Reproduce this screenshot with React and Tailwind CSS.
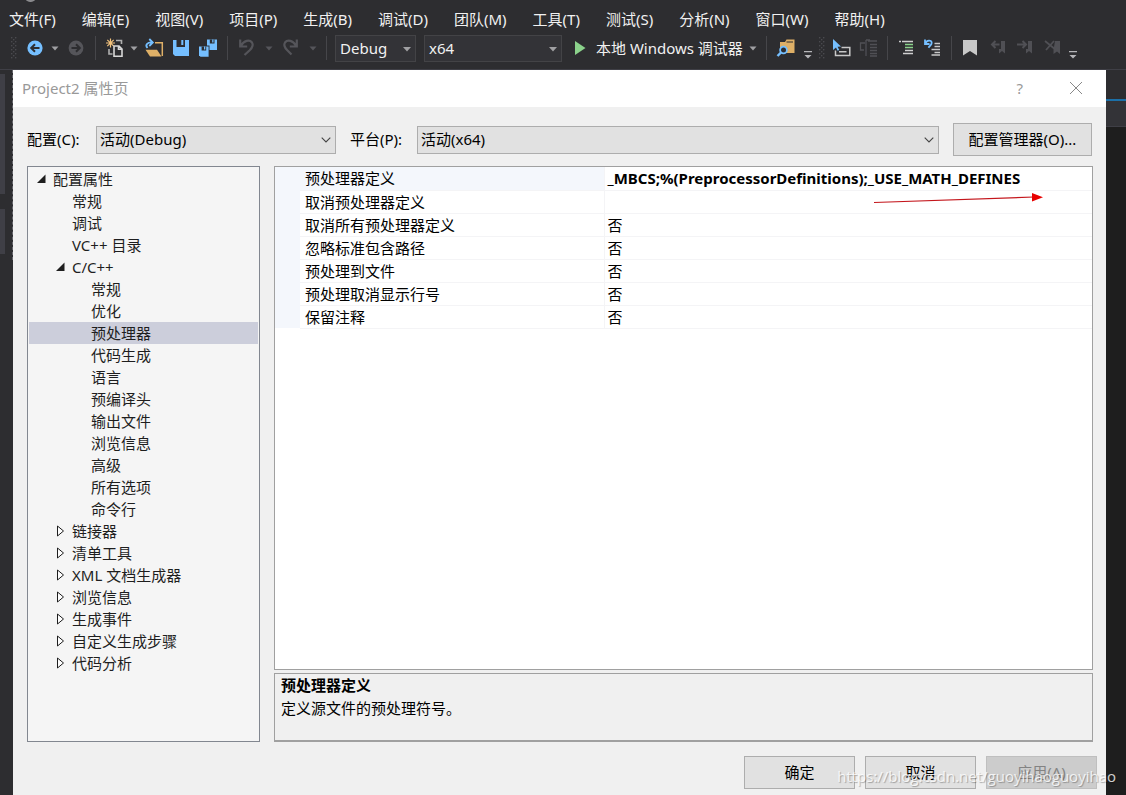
import clsx from 'clsx'

const menus = ['文件(F)', '编辑(E)', '视图(V)', '项目(P)', '生成(B)', '调试(D)', '团队(M)', '工具(T)', '测试(S)', '分析(N)', '窗口(W)', '帮助(H)']

const tree = [
  { label: '配置属性', level: 0, state: 'open' },
  { label: '常规', level: 1 },
  { label: '调试', level: 1 },
  { label: 'VC++ 目录', level: 1 },
  { label: 'C/C++', level: 1, state: 'open' },
  { label: '常规', level: 2 },
  { label: '优化', level: 2 },
  { label: '预处理器', level: 2, selected: true },
  { label: '代码生成', level: 2 },
  { label: '语言', level: 2 },
  { label: '预编译头', level: 2 },
  { label: '输出文件', level: 2 },
  { label: '浏览信息', level: 2 },
  { label: '高级', level: 2 },
  { label: '所有选项', level: 2 },
  { label: '命令行', level: 2 },
  { label: '链接器', level: 1, state: 'closed' },
  { label: '清单工具', level: 1, state: 'closed' },
  { label: 'XML 文档生成器', level: 1, state: 'closed' },
  { label: '浏览信息', level: 1, state: 'closed' },
  { label: '生成事件', level: 1, state: 'closed' },
  { label: '自定义生成步骤', level: 1, state: 'closed' },
  { label: '代码分析', level: 1, state: 'closed' },
]

const indents = ['pl-[7px]', 'pl-[26px]', 'pl-[45px]']

const properties = [
  { name: '预处理器定义', value: '_MBCS;%(PreprocessorDefinitions);_USE_MATH_DEFINES', active: true },
  { name: '取消预处理器定义', value: '' },
  { name: '取消所有预处理器定义', value: '否' },
  { name: '忽略标准包含路径', value: '否' },
  { name: '预处理到文件', value: '否' },
  { name: '预处理取消显示行号', value: '否' },
  { name: '保留注释', value: '否' },
]

function ToolButton({ label, className, children }) {
  return (
    <button aria-label={label} className={clsx('shrink-0', className)}>
      <svg width="20" height="20" viewBox="0 0 20 20" fill="none">{children}</svg>
    </button>
  )
}

function Caret({ className, dim }) {
  return (
    <button aria-label="展开" className={clsx('w-3 shrink-0', className)}>
      <svg width="12" height="20" viewBox="0 0 12 20">
        <path d="M2.5 8.5h7L6 12.5z" fill={dim ? '#55555a' : '#a0a0a3'} />
      </svg>
    </button>
  )
}

function Overflow({ className }) {
  return (
    <button aria-label="工具栏选项" className={clsx('w-3 shrink-0', className)}>
      <svg width="12" height="24" viewBox="0 0 12 24">
        <path d="M2 15h8v1.2H2zM2.5 19h7L6 22.5z" fill="#b5b5b8" />
      </svg>
    </button>
  )
}

function Separator({ className }) {
  return <div className={clsx('h-6 w-px shrink-0 bg-[#46464a]', className)} />
}

function Grip({ className }) {
  return (
    <svg width="8" height="22" viewBox="0 0 8 22" className={clsx('shrink-0', className)} fill="#4a4a4f">
      {[0, 4, 8, 12, 16, 20].map(y => (
        <g key={y}>
          <rect x="1" y={y} width="1.4" height="1.4" />
          <rect x="5" y={y} width="1.4" height="1.4" />
          <rect x="3" y={y + 2} width="1.4" height="1.4" />
        </g>
      ))}
    </svg>
  )
}

function ToolbarSelect({ label, value, className }) {
  return (
    <div className={clsx('relative shrink-0', className)}>
      <select aria-label={label} className="h-[27px] w-full appearance-none border border-[#434346] bg-[#333337] px-1 text-[#f1f1f1]">
        <option>{value}</option>
      </select>
      <svg width="8" height="5" viewBox="0 0 8 5" className="pointer-events-none absolute right-[5px] top-[12px]">
        <path d="M0 0h8L4 4.5z" fill="#a0a0a3" />
      </svg>
    </div>
  )
}

function DialogSelect({ id, value, className }) {
  return (
    <div className={clsx('relative', className)}>
      <select id={id} className="h-7 w-full appearance-none border border-[#adadad] bg-[#e1e1e1] px-[3px] pb-[2px] text-black">
        <option>{value}</option>
      </select>
      <svg width="10" height="6" viewBox="0 0 10 6" className="pointer-events-none absolute right-[5px] top-[11px]">
        <path d="M.7.7 5 5 9.3.7" fill="none" stroke="#444" strokeWidth="1.1" />
      </svg>
    </div>
  )
}

function Toolbar() {
  return (
    <div className="flex h-7 items-center pl-[10px] text-[#f1f1f1]">
      <Grip />
      <ToolButton label="后退" className="ml-[7px]">
        <circle cx="10" cy="10" r="7.6" fill="#75bfff" />
        <path d="M14.5 10H6.5M10 6.2 6.2 10l3.8 3.8" stroke="#2d2d30" strokeWidth="2" />
      </ToolButton>
      <Caret className="ml-1 mr-[5px]" />
      <ToolButton label="前进">
        <circle cx="10" cy="10" r="7.4" fill="#55555a" />
        <path d="M5.5 10h8M10 6.2l3.8 3.8-3.8 3.8" stroke="#2d2d30" strokeWidth="2" />
      </ToolButton>
      <Separator className="mx-[9px]" />
      <ToolButton label="新建项目">
        <path d="M5.5.5v9M1 5h9M2.3 1.8l6.4 6.4M8.7 1.8 2.3 8.2" stroke="#f2c27c" strokeWidth="1.2" />
        <path d="M11 2.5h5.5V6M4 11v5h3.500" stroke="#b0b0b0" strokeWidth="1.600" />
        <path d="M9 8h5l3 3v7.2H9zM13.5 8v3.3H17" stroke="#d8d8d8" strokeWidth="1.6" />
      </ToolButton>
      <Caret className="ml-[3px] mr-1" />
      <ToolButton label="打开文件">
        <path d="M11 4.8h7.3V18" stroke="#dfb067" strokeWidth="1.5" />
        <path d="M1.5 11.8H13l4.5 6.7H6z" fill="#dfb067" />
        <path d="M3.5 10C.5 6.8 4 4 8 4.5M5.3 1l3.5 3.5L5.3 8" stroke="#75bfff" strokeWidth="1.8" />
      </ToolButton>
      <ToolButton label="保存" className="ml-[7px]">
        <path d="M2 2h16v16H4l-2-2z" fill="#75bfff" />
        <path d="M5.5 2H14v7H5.5z" fill="#2d2d30" />
        <path d="M10.3 2h2v5h-2z" fill="#75bfff" />
      </ToolButton>
      <ToolButton label="全部保存" className="ml-[7px]">
        <path d="M9 1.5h10V12h-8.5L9 10.5z" fill="#75bfff" />
        <path d="M11.8 1.5h4.7v4h-4.7z" fill="#2d2d30" />
        <path d="M14.2 1.5h1.3v3h-1.3z" fill="#75bfff" />
        <path d="M.5 7.5h11v11.8H.5z" fill="#2d2d30" />
        <path d="M1 8.5h9.6v10.2H2.5L1 17.2z" fill="#75bfff" />
        <path d="M3.6 8.5h4.6v4H3.6z" fill="#2d2d30" />
        <path d="M6 8.5h1.3v3H6z" fill="#75bfff" />
      </ToolButton>
      <Separator className="mx-[9px]" />
      <ToolButton label="撤消">
        <path d="M3.2 1.5v7h7M3.8 8C7 2.2 12.5 1.3 15 4.5c2 3-.2 5.6-2.3 7.7L7.5 17" stroke="#55555a" strokeWidth="2.2" />
      </ToolButton>
      <Caret dim className="ml-[6px] mr-[5px]" />
      <ToolButton label="重做">
        <path d="M16.800 1.5v7h-7M16.2 8C13 2.2 7.5 1.3 5 4.5c-2 3 .2 5.6 2.3 7.7l4.2 4.3" stroke="#55555a" strokeWidth="2.2" />
      </ToolButton>
      <Caret dim className="mx-[7px]" />
      <Separator />
      <ToolbarSelect label="解决方案配置" value="Debug" className="ml-2 w-[81px]" />
      <ToolbarSelect label="解决方案平台" value="x64" className="ml-2 w-[138px]" />
      <button className="ml-2 flex shrink-0 items-center gap-[6px]">
        <svg width="20" height="20" viewBox="0 0 20 20"><path d="M5 3v14l10.5-7z" fill="#8bd28b" /></svg>
        本地 Windows 调试器
      </button>
      <Caret className="ml-1" />
      <Separator className="ml-[7px] mr-[9px]" />
      <ToolButton label="在文件中查找">
        <path d="M4 4h5l1.5-2.5h8V15H4z" fill="#dfb067" />
        <path d="M10.5 4H17" stroke="#2d2d30" />
        <circle cx="7.5" cy="12" r="3.4" fill="#2d2d30" stroke="#75bfff" strokeWidth="1.8" />
        <path d="M5 14.5 1.5 18" stroke="#75bfff" strokeWidth="2.4" />
      </ToolButton>
      <Overflow className="ml-[6px]" />
      <Grip className="mx-1" />
      <ToolButton label="选择元素" className="ml-[2px]">
        <path d="M1 1l8 7.5-3.5.3L7.3 12l-1.7.8L4 9.6 1 12z" fill="#75bfff" />
        <path d="M3.5 12.5v5h14.3v-8H9.5M7 13.8h7.5" stroke="#c8c8c8" strokeWidth="1.5" />
      </ToolButton>
      <ToolButton label="文档大纲" className="ml-[7px]">
        <path d="M6 5H1.5v7H5M7 2h4M7 2v16M9 3h9M11 6.5h7M11 9.5h7M11 12.5h7M11 15.5h7M11 18h7" stroke="#505055" strokeWidth="1.3" />
      </ToolButton>
      <Separator className="mx-2" />
      <ToolButton label="减少缩进">
        <path d="M3 3.5h2M6 3.5h11M9 12.5h8M7 15.5h10" stroke="#d0d0d0" strokeWidth="1.4" />
        <path d="M9 6.5h8M9 9.5h8" stroke="#8bd28b" strokeWidth="1.6" />
      </ToolButton>
      <ToolButton label="增加缩进" className="ml-[7px]">
        <path d="M2 1.500v4.500h4.500M2.500 5.500C3.500 2 8.500 1.700 8.700 4.700c.1 1.800-1.400 2.800-3.200 5" stroke="#75bfff" strokeWidth="1.800" />
        <path d="M11.5 5.5H17M11.5 8.5H17M8.5 11.5H17M11.5 14.5H17M8.5 17H17" stroke="#c8c8c8" strokeWidth="1.4" />
      </ToolButton>
      <Separator className="mx-2" />
      <ToolButton label="书签">
        <path d="M3 2h14v15.5L10 13l-7 4.5z" fill="#c8c8c8" />
      </ToolButton>
      <ToolButton label="上一书签" className="ml-[9px]">
        <path d="M12 3h4v12.5L13 13l-3 2.5V11h2z" fill="#505055" />
        <path d="M10.5 6.5H3M6.5 3 3 6.5 6.5 10" stroke="#505055" strokeWidth="2" />
      </ToolButton>
      <ToolButton label="下一书签" className="ml-[7px]">
        <path d="M12 3h4v12.5L13 13l-3 2.5V11h2z" fill="#505055" />
        <path d="M1 6.5h9M6.5 3 10 6.5 6.5 10" stroke="#505055" strokeWidth="2" />
      </ToolButton>
      <ToolButton label="清除书签" className="ml-[7px]">
        <path d="M12 3h5v13l-3-2.5-3.5 2.5v-4z" fill="#505055" />
        <path d="M2 3l11 9M11 3l-8 9" stroke="#505055" strokeWidth="1.8" />
      </ToolButton>
      <Overflow className="ml-1" />
    </div>
  )
}

function TreeArrow({ state }) {
  return (
    <svg width="12" height="12" viewBox="0 0 12 12" className="shrink-0">
      {state === 'open' && <path d="M9.5 1.5V10H1z" fill="#1e1e1e" />}
      {state === 'closed' && <path d="M2.5 1v10l6-5z" fill="#fff" stroke="#1e1e1e" />}
    </svg>
  )
}

function PropertyTree() {
  return (
    <ul className="w-[233px] shrink-0 border border-[#828790] bg-[#f5f5f5] p-px text-[#1e1e1e]">
      {tree.map((item, i) => (
        <li key={i} className={clsx('flex h-[22px] items-center gap-[5px]', indents[item.level], item.selected && 'bg-[#cccedb]')}>
          <TreeArrow state={item.state} />
          {item.label}
        </li>
      ))}
    </ul>
  )
}

function PropertyGrid() {
  return (
    <div className="relative min-h-[400px] flex-1 border border-[#a0a0a0] bg-white">
      <table className="w-full table-fixed border-collapse">
        <tbody>
          {properties.map(p => (
            <tr key={p.name} className="h-[23px]">
              <td className="w-[25px] bg-[#f4f7fc] p-0" />
              <th className={clsx('w-[304px] border-b border-r border-[#f4f4f6] py-0 pl-[5px] text-left font-normal', p.active && 'bg-[#f4f7fc]')}>
                {p.name}
              </th>
              <td className={clsx('border-b border-[#f4f4f6] py-0 pl-[3px]', p.active && 'font-bold')}>{p.value}</td>
            </tr>
          ))}
        </tbody>
      </table>
      {/* red arrow under the added macro */}
      <svg width="170" height="12" viewBox="0 0 170 12" className="absolute left-[599px] top-[25px]">
        <path d="M0 10.5 160 5" stroke="#c4161c" strokeWidth="1.2" />
        <path d="M158 1v8.5l11-4.3z" fill="#e80000" />
      </svg>
    </div>
  )
}

export default function App() {
  const buttonClass = 'h-[33px] w-[111px] border border-[#adadad] bg-[#e1e1e1] pb-[2px]'
  return (
    <div className="relative flex min-h-screen flex-col overflow-hidden bg-[#2d2d30] font-['Noto_Sans','Noto_Sans_CJK_SC',sans-serif] text-[15px] leading-[22px]">
      <div className="absolute -top-2 left-[25px] h-[10px] w-[11px] rounded-full bg-[#8a8a8d]" />
      <header className="h-[70px] shrink-0 border-b border-[#3f3f46] pt-2">
        <nav className="mb-1 flex gap-[26px] pl-[9px] text-[#f1f1f1]">
          {menus.map(m => <button key={m} className="shrink-0">{m}</button>)}
        </nav>
        <Toolbar />
      </header>

      <div className="flex flex-1">
        {/* Collapsed side tabs */}
        <div className="w-[13px] shrink-0">
          <div className="h-[190px] space-y-[15px] border-r border-dashed border-[#66666c] pt-1">
            <div className="h-[120px] w-[5px] bg-[#3f3f46]" />
            <div className="h-[45px] w-[5px] bg-[#3f3f46]" />
          </div>
        </div>

        <main className="flex min-w-0 flex-1 flex-col bg-[#f0f0f0] text-black">
          <div className="flex h-[37px] items-center bg-white pb-px pl-[9px] pr-[23px] text-[#999]">
            <h1 className="flex-1">Project2 属性页</h1>
            <button aria-label="帮助" className="mr-[46px]">?</button>
            <button aria-label="关闭">
              <svg width="14" height="14" viewBox="0 0 14 14"><path d="M1 1l12 12M13 1 1 13" stroke="#888" /></svg>
            </button>
          </div>

          <div className="flex items-center px-[14px] pb-[10px] pt-4">
            <label htmlFor="config" className="w-[69px] shrink-0 pb-[2px]">配置(C):</label>
            <DialogSelect id="config" value="活动(Debug)" className="w-60 shrink-0" />
            <label htmlFor="platform" className="ml-[14px] w-[67px] shrink-0 pb-[2px]">平台(P):</label>
            <DialogSelect id="platform" value="活动(x64)" className="min-w-0 flex-1" />
            <button className="ml-[14px] h-[33px] w-[139px] shrink-0 border border-[#adadad] bg-[#e1e1e1] pb-[2px]">配置管理器(O)...</button>
          </div>

          <div className="flex flex-1 gap-[14px] pl-[14px] pr-[13px]">
            <PropertyTree />
            <div className="flex min-w-0 flex-1 flex-col gap-[3px]">
              <PropertyGrid />
              <div className="h-[69px] border border-b-2 border-[#a0a0a0] px-[6px] leading-[23px]">
                <h2 className="font-bold">预处理器定义</h2>
                <p>定义源文件的预处理符号。</p>
              </div>
            </div>
          </div>

          <div className="flex justify-end gap-[10px] pb-[6px] pr-[9px] pt-[14px]">
            <button className={buttonClass}>确定</button>
            <button className={buttonClass}>取消</button>
            <button disabled className="h-[33px] w-[111px] border border-[#bfbfbf] bg-[#cccccc] pb-[2px] text-[#838383]">应用(A)</button>
          </div>
        </main>

        {/* Editor behind the dialog */}
        <div className="flex w-5 shrink-0 flex-col">
          <div className="box-content h-[29px] border-b-2 border-[#1c70a8]" />
          <div className="h-[26px] border-b border-[#3f3f46] bg-[#333337]" />
          <div className="flex-1 bg-[#1e1e1e]" />
        </div>
      </div>

      <span className="pointer-events-none absolute bottom-2 right-[10px] font-['Open_Sans',sans-serif] text-white/80 [text-shadow:1px_1px_1px_rgba(0,0,0,0.3)]">https://blog.csdn.net/guoyihaoguoyihao</span>
    </div>
  )
}
